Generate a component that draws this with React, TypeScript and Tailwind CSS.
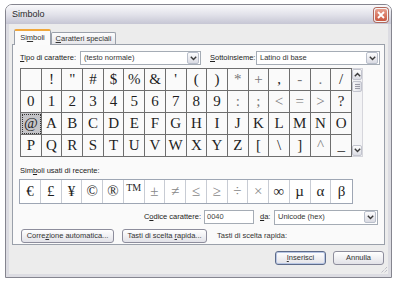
import React from 'react';

const gridRows = [
  [' ', '!', '"', '#', '$', '%', '&', "'", '(', ')', '*', '+', ',', '-', '.', '/'],
  ['0', '1', '2', '3', '4', '5', '6', '7', '8', '9', ':', ';', '<', '=', '>', '?'],
  ['@', 'A', 'B', 'C', 'D', 'E', 'F', 'G', 'H', 'I', 'J', 'K', 'L', 'M', 'N', 'O'],
  ['P', 'Q', 'R', 'S', 'T', 'U', 'V', 'W', 'X', 'Y', 'Z', '[', '\\', ']', '^', '_'],
];

const recent = ['€', '£', '¥', '©', '®', '™', '±', '≠', '≤', '≥', '÷', '×', '∞', 'µ', 'α', 'β'];
const light = ['*', '+', '-', '.', ':', ';', '<', '=', '>', '^', '±', '≠', '≤', '≥', '÷', '×'];

function Chevron() {
  return (
    <svg width="7" height="5" viewBox="0 0 7 5">
      <path d="M0.8 0.8 L3.5 3.6 L6.2 0.8" fill="none" stroke="#3a3a3a" strokeWidth="1.4" />
    </svg>
  );
}

function ChevronUp() {
  return (
    <svg width="7" height="5" viewBox="0 0 7 5">
      <path d="M0.8 4.2 L3.5 1.4 L6.2 4.2" fill="none" stroke="#3a3a3a" strokeWidth="1.4" />
    </svg>
  );
}

function Select({ value, className }: { value: string; className: string }) {
  return (
    <div className={`flex h-[14px] shrink-0 items-center border border-[#a5acb5] bg-white ${className}`}>
      <span className="flex-1 truncate pl-[3px] leading-none text-[#333]">{value}</span>
      <span className="mr-[1px] flex h-[12px] w-[12px] items-center justify-center rounded-[2px] border border-[#b9bfcb] bg-linear-to-b from-[#fcfcfd] to-[#dadbe3]">
        <Chevron />
      </span>
    </div>
  );
}

function Button({ children, className, primary }: { children: React.ReactNode; className: string; primary?: boolean }) {
  return (
    <div
      className={`flex h-[14px] items-center justify-center rounded-[3px] border bg-linear-to-b from-[#ffffff] to-[#e2e2e8] leading-none text-[#333] ${primary ? 'border-[#5d6b8a] shadow-[inset_0_0_0_1px_#b8c6e4]' : 'border-[#8d8d9c]'} ${className}`}
    >
      <span>{children}</span>
    </div>
  );
}

export default function App() {
  return (
    <div className="h-[284px] w-[400px] bg-white pl-[5px] pt-[4px] font-['Liberation_Sans',Arial,sans-serif] text-[7.5px] text-[#222]">
      <div className="flex h-[274px] w-[387px] flex-col overflow-hidden rounded-t-[7px] border border-[#85858f]">
        {/* title bar */}
        <div className="flex h-[19px] shrink-0 items-center bg-linear-to-b from-[#f9f9fb] via-[#e2e2ea] to-[#c6c6d4] pl-[6px] pr-[3px]">
          <span className="text-[9px] text-[#2a2a2a]">Simbolo</span>
          <div className="ml-auto flex h-[14px] w-[14px] items-center justify-center rounded-[3px] border border-[#f4f4f4] bg-linear-to-b from-[#e8a08f] to-[#c9563f] shadow-[0_0_0_1px_#b06a5e]">
            <svg width="8" height="8" viewBox="0 0 8 8">
              <path d="M1 1 L7 7 M7 1 L1 7" stroke="#fff" strokeWidth="1.8" />
            </svg>
          </div>
        </div>

        {/* body */}
        <div className="relative flex flex-1 flex-col border-x-[3px] border-b-[3px] border-[#dcdce2] bg-[#ececec] px-[3px] pt-[5px]">
          {/* tabs */}
          <div className="flex h-[15px] items-end pl-[2px]">
            <div className="relative z-10 -mb-px flex h-[16px] w-[37px] items-center justify-center rounded-t-[2px] border-x border-t-2 border-x-[#9aa0aa] border-t-[#f0a73c] bg-[#fbfbfb]">
              <span className="leading-none text-[#333]">
                Si<span className="underline">m</span>boli
              </span>
            </div>
            <div className="flex h-[12px] w-[65px] items-center justify-center rounded-t-[2px] border-x border-t border-[#9aa0aa] bg-linear-to-b from-[#fdfdfd] to-[#e6e6ea]">
              <span className="leading-none text-[#333]">
                <span className="underline">C</span>aratteri speciali
              </span>
            </div>
          </div>

          {/* panel */}
          <div className="flex h-[201px] flex-col border border-[#9aa0aa] bg-[#fafafa] pl-[7px] pt-[6px]">
            <div className="flex h-[14px] items-center whitespace-nowrap">
              <span className="w-[60px] shrink-0">
                <span className="underline">T</span>ipo di carattere:
              </span>
              <Select value="(testo normale)" className="w-[121px]" />
              <span className="ml-[9px] w-[46px] shrink-0">
                <span className="underline">S</span>ottoinsieme:
              </span>
              <Select value="Latino di base" className="w-[124px]" />
            </div>

            {/* character grid */}
            <div className="mt-[3px] flex">
              <div className="grid w-[332px] grid-cols-16 border-l border-t border-[#6e6e6e] font-['Liberation_Serif','Times_New_Roman',serif]">
                {gridRows.flat().map((ch, i) => (
                  <div
                    key={i}
                    className={`flex h-[22px] items-center justify-center border-b border-r border-[#6e6e6e] text-[15px] leading-none ${light.includes(ch) ? 'text-[#777]' : 'text-[#1e1e1e]'} ${ch === '@' ? 'bg-[#c4c4c8] outline-1 outline-dotted -outline-offset-2 outline-[#333]' : ''}`}
                  >
                    {ch}
                  </div>
                ))}
              </div>
              <div className="flex h-[89px] w-[11px] flex-col border border-l-0 border-[#d6d6dc] bg-[#f3f3f5]">
                <div className="flex h-[11px] items-center justify-center rounded-[2px] border border-[#c2c4ce] bg-linear-to-b from-[#fdfdfd] to-[#dcdde4]">
                  <ChevronUp />
                </div>
                <div className="mt-[1px] flex h-[11px] flex-col items-center justify-center gap-[1px] rounded-[2px] border border-[#c2c4ce] bg-linear-to-r from-[#f8f8fa] to-[#dcdde4]">
                  <span className="h-px w-[5px] bg-[#9a9aa6]" />
                  <span className="h-px w-[5px] bg-[#9a9aa6]" />
                  <span className="h-px w-[5px] bg-[#9a9aa6]" />
                </div>
                <div className="mt-auto flex h-[11px] items-center justify-center rounded-[2px] border border-[#c2c4ce] bg-linear-to-b from-[#fdfdfd] to-[#dcdde4]">
                  <Chevron />
                </div>
              </div>
            </div>

            <div className="mt-[10px] leading-none">
              Sim<span className="underline">b</span>oli usati di recente:
            </div>

            {/* recent symbols */}
            <div className="-ml-px mt-[4px] grid h-[25px] w-[334px] grid-cols-16 border border-[#9ea6b4] bg-white font-['Liberation_Serif','Times_New_Roman',serif]">
              {recent.map((ch, i) => (
                <div
                  key={i}
                  className={`flex items-center justify-center text-[15px] leading-none ${i < 15 ? 'border-r border-[#c8ccd4]' : ''} ${light.includes(ch) ? 'text-[#888]' : 'text-[#1e1e1e]'}`}
                >
                  {ch === '™' ? <span className="-mt-[6px] text-[10px]">TM</span> : ch}
                </div>
              ))}
            </div>

            <div className="mt-[6px] flex h-[15px] items-center whitespace-nowrap">
              <span className="w-[184px] shrink-0 pr-[3px] text-right">
                C<span className="underline">o</span>dice carattere:
              </span>
              <div className="flex h-[14px] w-[50px] items-center border border-[#a5acb5] bg-white pl-[2px] leading-none text-[#444]">
                0040
              </div>
              <span className="ml-[6px] w-[14px] shrink-0">
                <span className="underline">d</span>a:
              </span>
              <Select value="Unicode (hex)" className="h-[15px] w-[104px]" />
            </div>

            <div className="mt-[4px] flex h-[14px] items-center whitespace-nowrap">
              <Button className="ml-[1px] w-[93px]">
                Corre<span className="underline">z</span>ione automatica...
              </Button>
              <Button className="ml-[8px] w-[85px]">
                Tasti di scelta <span className="underline">r</span>apida...
              </Button>
              <span className="ml-[10px] text-[#333]">Tasti di scelta rapida:</span>
            </div>
          </div>

          {/* dialog buttons */}
          <div className="mt-[6px] flex justify-end pr-[1px]">
            <Button primary className="w-[51px]">
              <span className="underline">I</span>nserisci
            </Button>
            <Button className="ml-[7px] w-[51px]">Annulla</Button>
          </div>

          {/* resize grip */}
          <svg className="absolute bottom-0 right-0" width="9" height="9" viewBox="0 0 9 9">
            <path d="M8 2 L2 8 M8 5 L5 8" stroke="#a8a8b4" strokeWidth="1" strokeDasharray="1 1" />
          </svg>
        </div>
      </div>
    </div>
  );
}
